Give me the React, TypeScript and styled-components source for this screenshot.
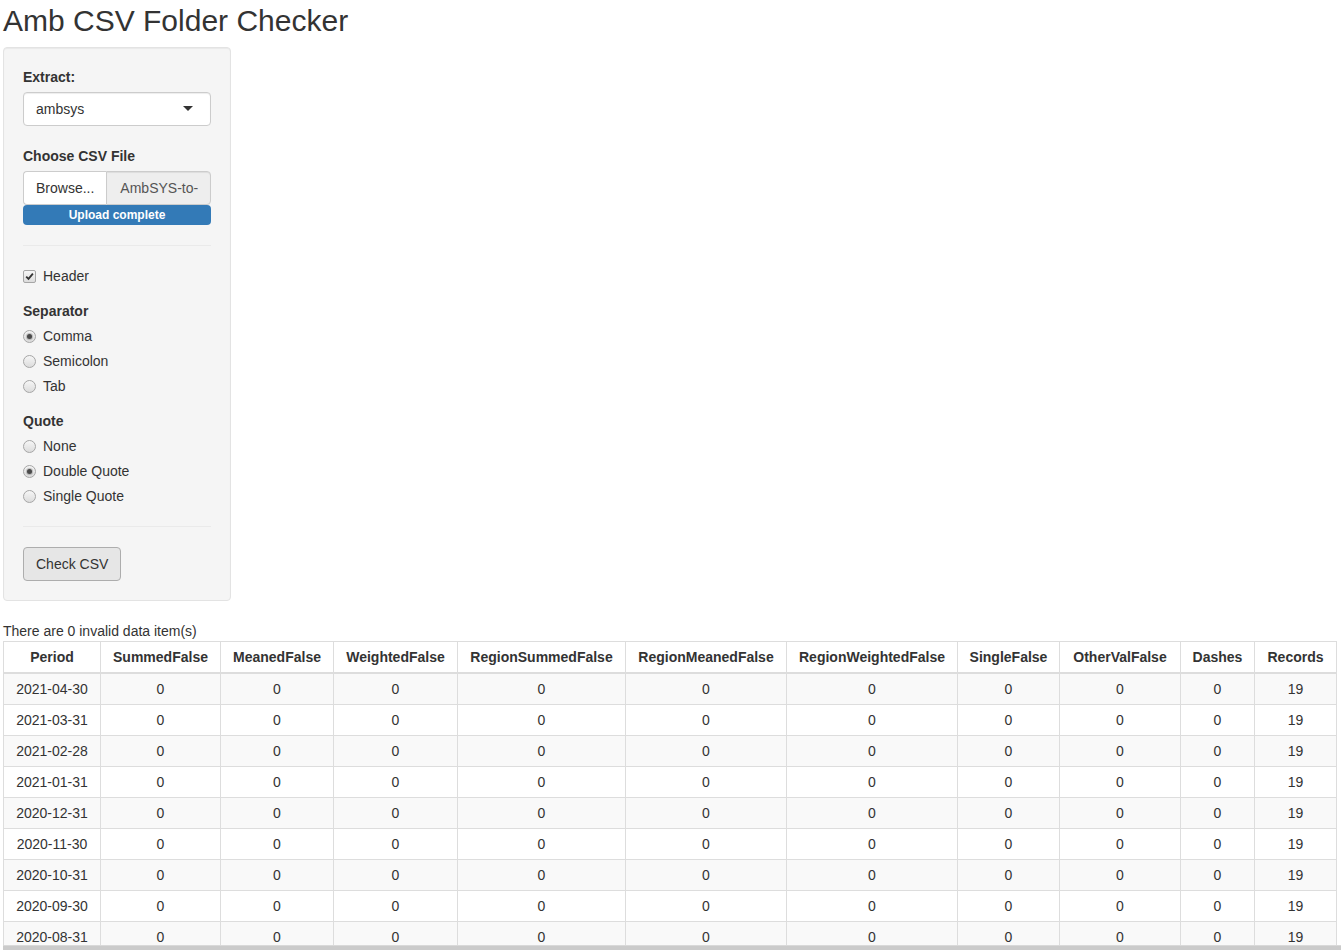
import React from "react";
import styled, { createGlobalStyle } from "styled-components";

const GlobalStyle = createGlobalStyle`
  html, body {
    margin: 0;
    padding: 0;
    overflow: hidden;
    background: #fff;
  }
  body {
    font-family: "Liberation Sans", Arial, Helvetica, sans-serif;
    font-size: 14px;
    line-height: 1.42857143;
    color: #333;
  }
  * { box-sizing: border-box; }
`;

const Page = styled.div`
  padding: 0 0 0 3px;
  display: flex;
  flex-direction: column;
`;

const Title = styled.h2`
  margin: 4px 0 10px 0;
  font-size: 30px;
  font-weight: 500;
  line-height: 1.1;
  color: #333;
`;

const Sidebar = styled.div`
  width: 228px;
  padding: 19px;
  background: #f5f5f5;
  border: 1px solid #e3e3e3;
  border-radius: 4px;
  box-shadow: inset 0 1px 1px rgba(0, 0, 0, 0.05);
  display: flex;
  flex-direction: column;
  align-items: stretch;
`;

const Group = styled.div<{ $mt?: number }>`
  display: flex;
  flex-direction: column;
  margin-top: ${(p) => p.$mt ?? 0}px;
`;

const ControlLabel = styled.label`
  display: block;
  font-weight: bold;
  line-height: 20px;
  margin-bottom: 5px;
`;

const Select = styled.div`
  position: relative;
  height: 34px;
  padding: 6px 12px;
  background: #fff;
  border: 1px solid #ccc;
  border-radius: 4px;
  box-shadow: inset 0 1px 1px rgba(0, 0, 0, 0.075);
  line-height: 20px;
  color: #333;
  &::after {
    content: "";
    position: absolute;
    right: 17px;
    top: 50%;
    margin-top: -3px;
    border-style: solid;
    border-width: 5px 5px 0 5px;
    border-color: #333 transparent transparent transparent;
  }
`;

const InputGroup = styled.div`
  display: flex;
  height: 34px;
`;

const BrowseButton = styled.span`
  flex: none;
  display: flex;
  align-items: center;
  padding: 6px 12px;
  background: #fff;
  border: 1px solid #ccc;
  border-right: none;
  border-radius: 4px 0 0 4px;
  color: #333;
  line-height: 20px;
`;

const FileName = styled.div`
  flex: 1;
  min-width: 0;
  height: 34px;
  padding: 6px 12px 6px 13px;
  background: #eee;
  border: 1px solid #ccc;
  border-radius: 0 4px 4px 0;
  box-shadow: inset 0 1px 1px rgba(0, 0, 0, 0.075);
  line-height: 20px;
  color: #555;
  white-space: nowrap;
  overflow: hidden;
`;

const Progress = styled.div`
  height: 20px;
  background: #337ab7;
  border-radius: 4px;
  color: #fff;
  font-size: 12px;
  font-weight: bold;
  line-height: 20px;
  text-align: center;
`;

const Rule = styled.hr<{ $mt: number }>`
  width: 100%;
  margin: ${(p) => p.$mt}px 0 0 0;
  border: 0;
  border-top: 1px solid #eaeaea;
  height: 0;
`;

const OptionList = styled.div`
  display: flex;
  flex-direction: column;
  gap: 5px;
`;

const OptionRow = styled.label<{ $mt?: number }>`
  display: flex;
  align-items: center;
  gap: 7px;
  height: 20px;
  line-height: 20px;
  margin-top: ${(p) => p.$mt ?? 0}px;
  font-weight: normal;
  cursor: pointer;
`;

const Mark = styled.span<{ $round?: boolean }>`
  flex: none;
  width: 13px;
  height: 13px;
  display: flex;
  align-items: center;
  justify-content: center;
  border: 1px solid #a6a6a6;
  border-radius: ${(p) => (p.$round ? "50%" : "2px")};
  background: linear-gradient(#f6f6f6, #dcdcdc);
`;

const Dot = styled.span`
  width: 5px;
  height: 5px;
  border-radius: 50%;
  background: #4a4a4a;
  box-shadow: 0 0 1px 1px rgba(90, 90, 90, 0.35);
`;

const ActionButton = styled.button<{ $mt: number }>`
  align-self: flex-start;
  margin-top: ${(p) => p.$mt}px;
  height: 34px;
  padding: 6px 12px;
  font-family: inherit;
  font-size: 14px;
  line-height: 20px;
  color: #333;
  background: #e6e6e6;
  border: 1px solid #adadad;
  border-radius: 4px;
  cursor: pointer;
`;

const Summary = styled.div`
  margin-top: 20px;
  line-height: 20px;
`;

const TableViewport = styled.div`
  height: 304px;
  overflow: hidden;
`;

const ScrollTrack = styled.div`
  height: 17px;
  background: #cbcbcb;
  border-top: 1px solid #d9d9d9;
`;

const DataTable = styled.table`
  width: 1333px;
  table-layout: fixed;
  border-collapse: collapse;
  border: 1px solid #ddd;
`;

const Col = styled.col<{ $w: number }>`
  width: ${(p) => p.$w}px;
`;

const HeadCell = styled.th`
  padding: 5px;
  line-height: 20px;
  font-weight: bold;
  text-align: center;
  white-space: nowrap;
  border: 1px solid #ddd;
  border-bottom: 2px solid #ddd;
  color: #333;
`;

const BodyRow = styled.tr`
  &:nth-child(odd) {
    background: #f9f9f9;
  }
`;

const Cell = styled.td`
  padding: 5px;
  line-height: 20px;
  text-align: center;
  white-space: nowrap;
  border: 1px solid #ddd;
  color: #333;
`;

const columns: { name: string; width: number }[] = [
  { name: "Period", width: 97 },
  { name: "SummedFalse", width: 120 },
  { name: "MeanedFalse", width: 113 },
  { name: "WeightedFalse", width: 124 },
  { name: "RegionSummedFalse", width: 168 },
  { name: "RegionMeanedFalse", width: 161 },
  { name: "RegionWeightedFalse", width: 171 },
  { name: "SingleFalse", width: 102 },
  { name: "OtherValFalse", width: 121 },
  { name: "Dashes", width: 74 },
  { name: "Records", width: 82 },
];

const periods = [
  "2021-04-30",
  "2021-03-31",
  "2021-02-28",
  "2021-01-31",
  "2020-12-31",
  "2020-11-30",
  "2020-10-31",
  "2020-09-30",
  "2020-08-31",
];

const CheckIcon = () => (
  <svg width="9" height="9" viewBox="0 0 9 9">
    <path d="M1.2 4.6 L3.5 6.9 L7.9 1.6" fill="none" stroke="#333" strokeWidth="1.8" />
  </svg>
);

const Radio: React.FC<{ label: string; checked?: boolean }> = ({ label, checked }) => (
  <OptionRow>
    <Mark $round>{checked ? <Dot /> : null}</Mark>
    {label}
  </OptionRow>
);

export default function App() {
  return (
    <>
      <GlobalStyle />
      <Page>
        <Title>Amb CSV Folder Checker</Title>
        <Sidebar>
          <Group>
            <ControlLabel>Extract:</ControlLabel>
            <Select>ambsys</Select>
          </Group>
          <Group $mt={20}>
            <ControlLabel>Choose CSV File</ControlLabel>
            <InputGroup>
              <BrowseButton>Browse...</BrowseButton>
              <FileName>AmbSYS-to-</FileName>
            </InputGroup>
            <Progress>Upload complete</Progress>
          </Group>
          <Rule $mt={20} />
          <OptionRow $mt={20}>
            <Mark>
              <CheckIcon />
            </Mark>
            Header
          </OptionRow>
          <Group $mt={15}>
            <ControlLabel>Separator</ControlLabel>
            <OptionList>
              <Radio label="Comma" checked />
              <Radio label="Semicolon" />
              <Radio label="Tab" />
            </OptionList>
          </Group>
          <Group $mt={15}>
            <ControlLabel>Quote</ControlLabel>
            <OptionList>
              <Radio label="None" />
              <Radio label="Double Quote" checked />
              <Radio label="Single Quote" />
            </OptionList>
          </Group>
          <Rule $mt={20} />
          <ActionButton $mt={20}>Check CSV</ActionButton>
        </Sidebar>
        <Summary>There are 0 invalid data item(s)</Summary>
        <TableViewport>
          <DataTable>
            <colgroup>
              {columns.map((c) => (
                <Col key={c.name} $w={c.width} />
              ))}
            </colgroup>
            <thead>
              <tr>
                {columns.map((c) => (
                  <HeadCell key={c.name}>{c.name}</HeadCell>
                ))}
              </tr>
            </thead>
            <tbody>
              {periods.map((p) => (
                <BodyRow key={p}>
                  <Cell>{p}</Cell>
                  {columns.slice(1, -1).map((c) => (
                    <Cell key={c.name}>0</Cell>
                  ))}
                  <Cell>19</Cell>
                </BodyRow>
              ))}
            </tbody>
          </DataTable>
        </TableViewport>
        <ScrollTrack />
      </Page>
    </>
  );
}
